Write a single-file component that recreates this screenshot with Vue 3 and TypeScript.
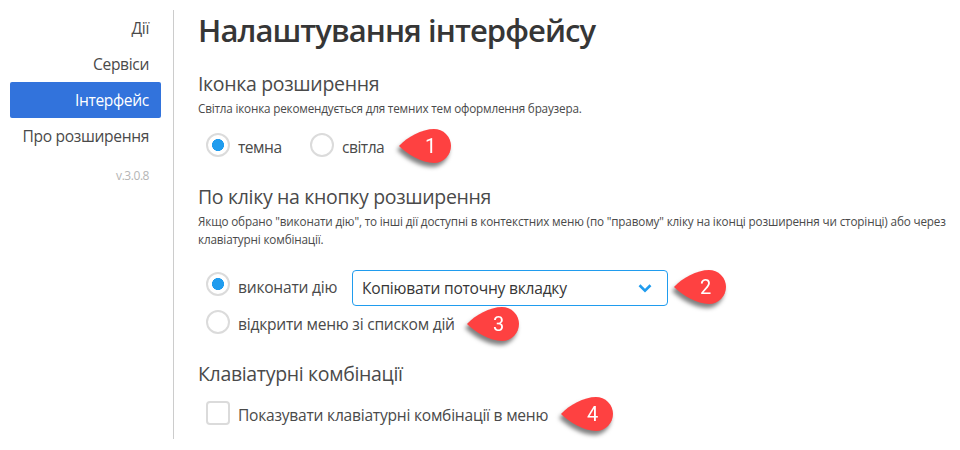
<script setup lang="ts">
import { ref } from 'vue'

const menu = ['Дії', 'Сервіси', 'Інтерфейс', 'Про розширення']
const current = ref('Інтерфейс')
const icon = ref<'dark' | 'light'>('dark')
const click = ref<'action' | 'menu'>('action')
const shortcuts = ref(false)
const markers = [1, 2, 3, 4]
</script>

<template>
  <div class="page">
    <aside class="sidebar">
      <nav>
        <a v-for="item in menu" :key="item" class="item" :class="{ active: item === current }" @click="current = item">{{ item }}</a>
      </nav>
      <div class="version">v.3.0.8</div>
    </aside>

    <main class="content">
      <h1>Налаштування інтерфейсу</h1>

      <section class="s-icon">
        <h2>Іконка розширення</h2>
        <p>Світла іконка рекомендується для темних тем оформлення браузера.</p>
        <div class="row">
          <label class="opt short first" @click="icon = 'dark'"><i class="radio" :class="{ on: icon === 'dark' }"></i><span>темна</span></label>
          <label class="opt short" @click="icon = 'light'"><i class="radio" :class="{ on: icon === 'light' }"></i><span>світла</span></label>
        </div>
      </section>

      <section class="s-click">
        <h2>По кліку на кнопку розширення</h2>
        <p>Якщо обрано "виконати дію", то інші дії доступні в контекстних меню (по "правому" кліку на іконці розширення чи сторінці) або через<br>клавіатурні комбінації.</p>
        <div class="row action">
          <label class="opt" @click="click = 'action'"><i class="radio" :class="{ on: click === 'action' }"></i><span>виконати дію</span></label>
          <div class="select">
            <span>Копіювати поточну вкладку</span>
            <svg width="14" height="10" viewBox="0 0 14 10"><path d="M1.5 2.3 7 7.7 12.5 2.3" fill="none" stroke="#209cee" stroke-width="2.6" /></svg>
          </div>
        </div>
        <div class="row second">
          <label class="opt" @click="click = 'menu'"><i class="radio" :class="{ on: click === 'menu' }"></i><span>відкрити меню зі списком дій</span></label>
        </div>
      </section>

      <section class="s-keys">
        <h2>Клавіатурні комбінації</h2>
        <div class="row">
          <label class="opt" @click="shortcuts = !shortcuts"><i class="check"></i><span>Показувати клавіатурні комбінації в меню</span></label>
        </div>
      </section>
    </main>

    <svg v-for="n in markers" :key="n" class="marker" :class="'p' + n" width="64" height="52" viewBox="0 0 64 52">
      <path d="M4 22 C12 13 27 5 39 5 A17 17 0 0 1 39 39 C27 39 12 30 4 22 Z" fill="#fe4141" />
      <text x="35.5" y="29" text-anchor="middle">{{ n }}</text>
    </svg>
  </div>
</template>

<style>
body {
  background: #fff;
}
</style>

<style scoped>
.page {
  position: relative;
  display: flex;
  box-sizing: border-box;
  width: 960px;
  height: 450px;
  padding: 10px 0 11px 10px;
  overflow: hidden;
  color: #4a4a4a;
  font: 15.6px/24px "Open Sans", "Noto Sans", sans-serif;
  letter-spacing: -0.24px;
  white-space: nowrap;
}
.sidebar {
  flex: none;
  box-sizing: border-box;
  width: 164px;
  padding-right: 12px;
  border-right: 1px solid #ccc;
  text-align: right;
}
.item {
  display: block;
  height: 24px;
  padding: 6px 12px;
  border-radius: 2px;
  letter-spacing: -0.34px;
}
.item.active {
  background: #3273dc;
  color: #fff;
}
.version {
  margin-top: 13px;
  padding-right: 12px;
  color: #b5b5b5;
  font-size: 12px;
  line-height: 18px;
  letter-spacing: -0.45px;
}
.content {
  padding-left: 24px;
}
h1, h2, p {
  margin: 0;
}
h1 {
  height: 40px;
  color: #363636;
  font-size: 31px;
  font-weight: 600;
  line-height: 40px;
  letter-spacing: -0.92px;
}
h2 {
  height: 26px;
  font-size: 19.5px;
  font-weight: 400;
  line-height: 26px;
  letter-spacing: -0.33px;
}
p {
  padding: 2px 0 1px;
  font-size: 11.7px;
  line-height: 18px;
  letter-spacing: -0.18px;
}
.s-icon {
  padding-top: 21px;
}
.s-icon .row {
  margin-top: 15px;
}
.s-click {
  padding-top: 27px;
}
.s-click p {
  letter-spacing: -0.15px;
}
.row {
  display: flex;
  padding-left: 8px;
}
.opt {
  display: flex;
  gap: 8px;
  height: 24px;
}
.opt span {
  padding-top: 2px;
}
.short {
  letter-spacing: -0.5px;
}
.first {
  width: 104px;
}
.radio, .check {
  flex: none;
  box-sizing: border-box;
  width: 24px;
  height: 24px;
  border: 2px solid #dbdbdb;
  border-radius: 50%;
}
.check {
  border-radius: 4px;
}
.radio.on {
  background: radial-gradient(circle, #209cee 5.7px, transparent 6.3px);
}
.action {
  align-items: center;
  margin-top: 21px;
}
.action .opt {
  width: 146px;
  margin-top: -8px;
}
.action .opt span {
  padding-top: 3px;
}
.select {
  display: flex;
  align-items: center;
  justify-content: space-between;
  box-sizing: border-box;
  width: 316px;
  height: 36px;
  padding: 0 15px 0 9px;
  border: 1px solid #209cee;
  border-radius: 4px;
  color: #363636;
}
.second {
  margin-top: 4px;
}
.s-keys {
  padding-top: 27px;
}
.s-keys .row {
  margin-top: 14px;
}
.marker {
  position: absolute;
  letter-spacing: 0;
  filter: drop-shadow(-2px 4px 2px rgba(0, 0, 0, 0.5));
}
.marker text {
  fill: #fff;
  font: 20px Roboto, sans-serif;
}
.p1 { left: 395px; top: 124px; }
.p2 { left: 670px; top: 265px; }
.p3 { left: 463px; top: 302px; }
.p4 { left: 557px; top: 392px; }
</style>
